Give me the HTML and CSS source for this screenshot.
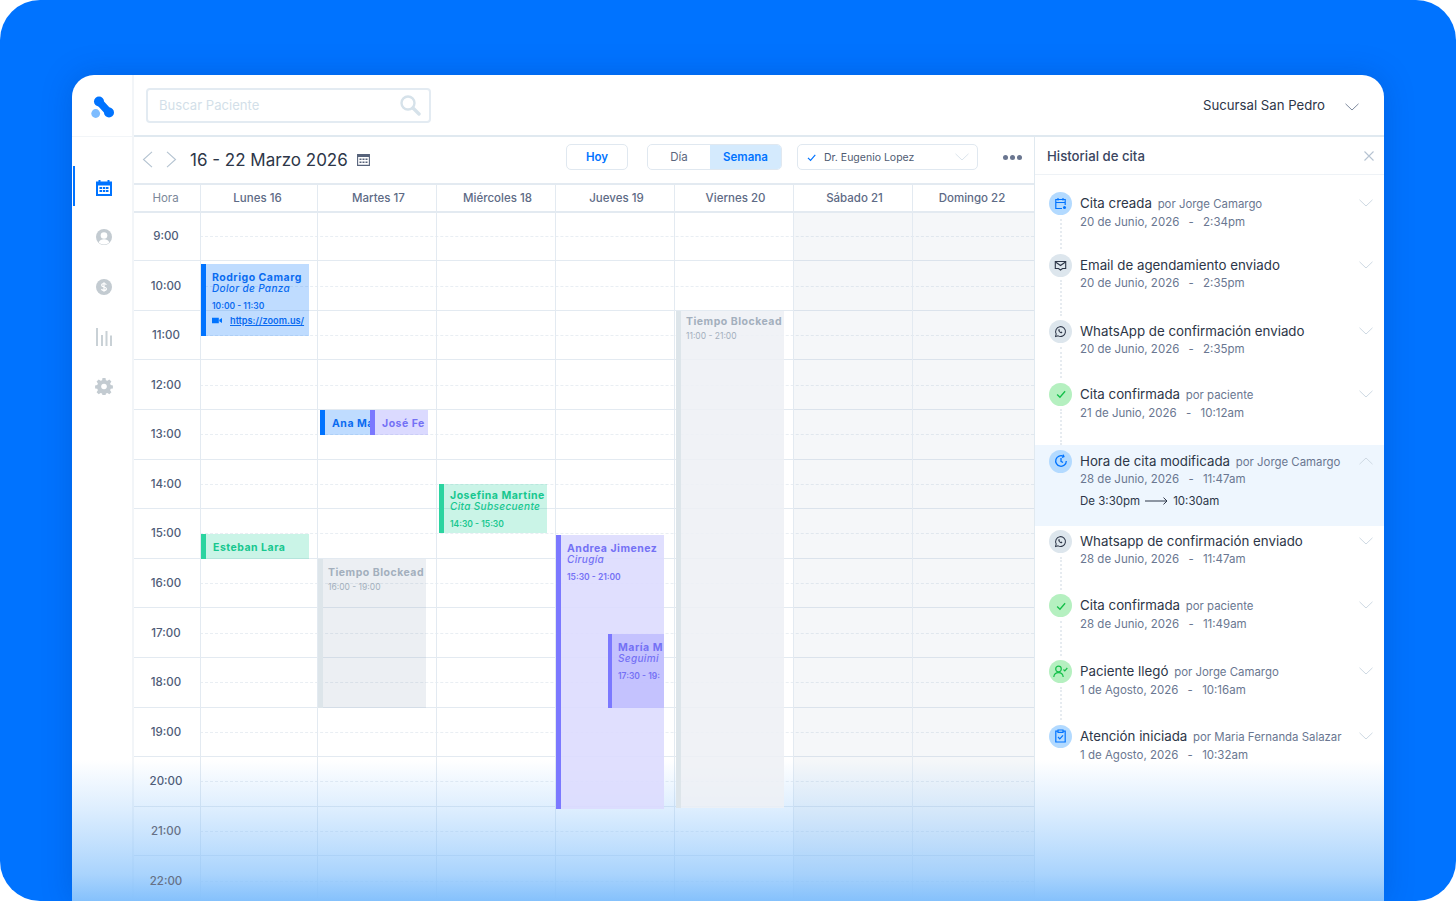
FILE: index.html
```html
<!DOCTYPE html>
<html lang="es">
<head>
  <meta charset="UTF-8" />
  <meta name="viewport" content="width=device-width, initial-scale=1.0" />
  <title>Historial de cita</title>
  <link rel="stylesheet" href="styles.css">
</head>
<body>
  <svg class="sprites" width="0" height="0">
    <symbol id="chev" viewBox="0 0 14 8"><path d="M.5.8 7 7l6.500-6.200" fill="none" stroke="currentColor" stroke-width="1"/></symbol>
    <symbol id="ok" viewBox="0 0 14 14"><path d="M2.500 7.500 5.800 10.800 11.800 3.800" fill="none" stroke="currentColor" stroke-width="1.500"/></symbol>
    <symbol id="wa" viewBox="0 0 14 14"><path d="M1.600 12.500l.8-2.900A5.300 5.300 0 1 1 4.500 11.700z" fill="none" stroke="currentColor" stroke-width="1.100" stroke-linejoin="round"/><path d="M5 4.600c-.7.600-.4 1.800.6 2.900s2.300 1.700 3 1.100l.5-.8-1.300-.8-.6.500c-.6-.2-1.100-.8-1.300-1.300l.5-.6-.7-1.300z" fill="currentColor"/></symbol>
  </svg>

  <div class="stage">
    <div class="app">
      <aside class="sidebar">
        <div class="logo">
          <svg width="26" height="26" viewBox="0 0 26 26">
            <path d="M10 8.500 20 19.500" stroke="#0073ff" stroke-width="7.500" stroke-linecap="round"/>
            <circle cx="10" cy="8.500" r="5" fill="#0073ff"/>
            <circle cx="20" cy="19.500" r="5" fill="#0073ff"/>
            <circle cx="6.700" cy="20.500" r="4.400" fill="#7dbcff"/>
          </svg>
        </div>
        <nav class="side-nav">
          <a class="side-link active">
            <svg width="18" height="18" viewBox="0 0 18 18"><path d="M1 2.500h2.500V1h2v1.500h7V1h2v1.500H17V17H1z" fill="#0073ff"/><path d="M3 6.500h12V15H3z" fill="#fff"/><path d="M4.500 8h2.500v2H4.500zM7.800 8h2.500v2H7.800zM11 8h2.500v2H11zM4.500 11h2.500v2H4.500zM7.800 11h2.500v2H7.800zM11 11h2.500v2H11z" fill="#0073ff"/></svg>
          </a>
          <a class="side-link">
            <svg width="18" height="18" viewBox="0 0 18 18"><circle cx="9" cy="9" r="8" fill="#c3cbd1"/><circle cx="9" cy="7.500" r="3.300" fill="#fff"/><path d="M3.600 14.500c1-2.600 3-3.300 5.400-3.300s4.400.7 5.400 3.300A8 8 0 0 1 9 16.500a8 8 0 0 1-5.400-2z" fill="#fff"/></svg>
          </a>
          <a class="side-link">
            <svg width="18" height="18" viewBox="0 0 18 18"><circle cx="9" cy="9" r="8" fill="#c3cbd1"/><path d="M11.300 6.800C11 5.900 10 5.500 9 5.500c-1.200 0-2.300.6-2.300 1.700 0 2.400 4.700 1.200 4.700 3.600 0 1.100-1.100 1.700-2.400 1.700-1.200 0-2.200-.5-2.500-1.500M9 4.200v9.600" fill="none" stroke="#fff" stroke-width="1.200"/></svg>
          </a>
          <a class="side-link">
            <svg width="18" height="20" viewBox="0 0 18 20"><path d="M1 2h2v18H1zM6 9h2v11H6zM10.500 5h2v15h-2zM15 9.500h2V20h-2z" fill="#c9d1d6"/></svg>
          </a>
          <a class="side-link">
            <svg width="18" height="18" viewBox="0 0 18 18"><path d="M7.500 1h3l.4 2.200 1.500.6 1.900-1.300 2.100 2.100-1.300 1.900.6 1.500 2.200.4v3l-2.200.4-.6 1.500 1.300 1.900-2.100 2.100-1.900-1.300-1.500.6-.4 2.200h-3l-.4-2.200-1.500-.6-1.900 1.300-2.100-2.100 1.300-1.900-.6-1.500-2.200-.4v-3l2.200-.4.6-1.500-1.300-1.900 2.100-2.100 1.900 1.300 1.500-.6z" fill="#c3cbd1"/><circle cx="9" cy="9.500" r="2.800" fill="#fff"/></svg>
          </a>
        </nav>
      </aside>

      <div class="content">
        <header class="topbar">
          <div class="search">
            <span>Buscar Paciente</span>
            <svg width="22" height="22" viewBox="0 0 22 22"><circle cx="9" cy="9" r="6.500" fill="none" stroke="#d6e2ea" stroke-width="2.400"/><path d="M14 14l6 6" stroke="#d6e2ea" stroke-width="3.400" stroke-linecap="round"/></svg>
          </div>
          <div class="branch">
            <span>Sucursal San Pedro</span>
            <svg class="branch-chev" width="14" height="8"><use href="#chev"/></svg>
          </div>
        </header>

        <div class="main">
          <section class="calendar">
            <div class="toolbar">
              <div class="toolbar-left">
                <svg class="arrow" width="11" height="17" viewBox="0 0 11 17"><path d="M10 .8 1.500 8.500 10 16.200" fill="none" stroke="#b4c3d1" stroke-width="1.100"/></svg>
                <svg class="arrow arrow-next" width="11" height="17" viewBox="0 0 11 17"><path d="M1 .8 9.500 8.500 1 16.200" fill="none" stroke="#b4c3d1" stroke-width="1.100"/></svg>
                <h1 class="range">16 - 22 Marzo 2026</h1>
                <svg class="range-icon" width="13" height="13" viewBox="0 0 13 13"><path d="M.6 1.600h11.800v10.800H.6z" fill="none" stroke="#56627a" stroke-width="1.100"/><path d="M.6 1.600h11.800V4H.6z" fill="#56627a"/><path d="M2.500 5.500h2v1.500h-2zM5.500 5.500h2v1.500h-2zM8.500 5.500h2v1.500h-2zM2.500 8.500h2v1.500h-2zM5.500 8.500h2v1.500h-2zM8.500 8.500h2v1.500h-2z" fill="#56627a"/></svg>
              </div>
              <button class="btn-today">Hoy</button>
              <div class="segmented">
                <span class="seg">Día</span>
                <span class="seg seg-on">Semana</span>
              </div>
              <div class="doctor">
                <svg class="doctor-check" width="11" height="11"><use href="#ok"/></svg>
                <span>Dr. Eugenio Lopez</span>
                <svg class="doctor-chev" width="14" height="8"><use href="#chev"/></svg>
              </div>
              <div class="dots"><i></i><i></i><i></i></div>
            </div>

            <div class="week-head">
              <div class="head-cell head-hour">Hora</div>
              <div class="head-cell head-first">Lunes 16</div>
              <div class="head-cell">Martes 17</div>
              <div class="head-cell">Miércoles 18</div>
              <div class="head-cell">Jueves 19</div>
              <div class="head-cell">Viernes 20</div>
              <div class="head-cell">Sábado 21</div>
              <div class="head-cell head-last">Domingo 22</div>
            </div>

            <div class="week-body">
              <div class="hours">
                <div class="hour"><span>9:00</span></div>
                <div class="hour"><span>10:00</span></div>
                <div class="hour"><span>11:00</span></div>
                <div class="hour"><span>12:00</span></div>
                <div class="hour"><span>13:00</span></div>
                <div class="hour"><span>14:00</span></div>
                <div class="hour"><span>15:00</span></div>
                <div class="hour"><span>16:00</span></div>
                <div class="hour"><span>17:00</span></div>
                <div class="hour"><span>18:00</span></div>
                <div class="hour"><span>19:00</span></div>
                <div class="hour"><span>20:00</span></div>
                <div class="hour hour-late"><span>21:00</span></div>
                <div class="hour hour-late"><span>22:00</span></div>
              </div>

              <div class="day day-1">
                <div class="event blue ev-rodrigo">
                  <b>Rodrigo Camarg</b>
                  <em>Dolor de Panza</em>
                  <small>10:00 - 11:30</small>
                  <div class="zoom">
                    <svg width="10" height="7" viewBox="0 0 10 7"><path d="M0 .8h6.800v5.400H0zM7.300 2.800 10 1v5L7.300 4.200z" fill="#0073ff"/></svg>
                    <u>https://zoom.us/</u>
                  </div>
                </div>
                <div class="event green ev-esteban"><b>Esteban Lara</b></div>
              </div>

              <div class="day day-2">
                <div class="event blue ev-ana"><b>Ana Ma</b></div>
                <div class="event purple ev-jose"><b>José Fe</b></div>
                <div class="event gray ev-block-mar"><b>Tiempo Blockead</b><small>16:00 - 19:00</small></div>
              </div>

              <div class="day day-3">
                <div class="event green ev-josefina">
                  <b>Josefina Martíne</b>
                  <em>Cita Subsecuente</em>
                  <small>14:30 - 15:30</small>
                </div>
              </div>

              <div class="day day-4">
                <div class="event purple ev-andrea">
                  <b>Andrea Jimenez</b>
                  <em>Cirugía</em>
                  <small>15:30 - 21:00</small>
                </div>
                <div class="event purple ev-maria">
                  <b>María M</b>
                  <em>Seguimi</em>
                  <small>17:30 - 19:</small>
                </div>
              </div>

              <div class="day day-5">
                <div class="event gray ev-block-vie"><b>Tiempo Blockead</b><small>11:00 - 21:00</small></div>
              </div>

              <div class="day day-6 weekend"></div>
              <div class="day day-7 weekend"></div>
            </div>
          </section>

          <aside class="history">
            <div class="history-head">
              <h2>Historial de cita</h2>
              <svg width="10" height="10" viewBox="0 0 10 10"><path d="M.5.500l9 9M9.500.500l-9 9" stroke="#b6c3d2" stroke-width="1.100"/></svg>
            </div>
            <ul class="log">
              <li class="log-item">
                <span class="dot dot-blue">
                  <svg width="13" height="13" viewBox="0 0 13 13" fill="none" stroke="currentColor" stroke-width="1.200"><path d="M8 11.500H1.800V2.500h9.400v5.500M1.800 5.500h9.400M4 1v2.500M9 1v2.500"/><circle cx="10.500" cy="10.500" r="1.500" fill="currentColor" stroke="none"/></svg>
                </span>
                <div class="log-text">
                  <p class="log-title">Cita creada <span>por Jorge Camargo</span></p>
                  <p class="log-date">20 de Junio, 2026 <i>-</i> 2:34pm</p>
                </div>
                <svg class="log-chev" width="14" height="8"><use href="#chev"/></svg>
              </li>
              <li class="log-item">
                <span class="dot dot-gray">
                  <svg width="13" height="13" viewBox="0 0 13 13" fill="none" stroke="currentColor" stroke-width="1.100"><path d="M1.300 2.500h10.400v7H8.500l-2 1.500-2-1.500H1.300z"/><path d="M1.500 3 6.500 6.500 11.500 3"/></svg>
                </span>
                <div class="log-text">
                  <p class="log-title">Email de agendamiento enviado</p>
                  <p class="log-date">20 de Junio, 2026 <i>-</i> 2:35pm</p>
                </div>
                <svg class="log-chev" width="14" height="8"><use href="#chev"/></svg>
              </li>
              <li class="log-item">
                <span class="dot dot-gray"><svg width="13" height="13"><use href="#wa"/></svg></span>
                <div class="log-text">
                  <p class="log-title">WhatsApp de confirmación enviado</p>
                  <p class="log-date">20 de Junio, 2026 <i>-</i> 2:35pm</p>
                </div>
                <svg class="log-chev" width="14" height="8"><use href="#chev"/></svg>
              </li>
              <li class="log-item">
                <span class="dot dot-green"><svg width="12" height="12"><use href="#ok"/></svg></span>
                <div class="log-text">
                  <p class="log-title">Cita confirmada <span>por paciente</span></p>
                  <p class="log-date">21 de Junio, 2026 <i>-</i> 10:12am</p>
                </div>
                <svg class="log-chev" width="14" height="8"><use href="#chev"/></svg>
              </li>
              <li class="log-item open">
                <span class="dot dot-blue">
                  <svg width="14" height="14" viewBox="0 0 14 14" fill="none" stroke="currentColor" stroke-width="1.300"><path d="M12.300 7A5.300 5.300 0 1 1 9.500 2.300"/><path d="M7 4v3.300l2 1.200M9.200 .6l.7 2-2 .7"/></svg>
                </span>
                <div class="log-text">
                  <p class="log-title">Hora de cita modificada <span>por Jorge Camargo</span></p>
                  <p class="log-date">28 de Junio, 2026 <i>-</i> 11:47am</p>
                  <p class="log-change">De 3:30pm
                    <svg width="23" height="8" viewBox="0 0 23 8"><path d="M0 4h22M18.500.6 22 4l-3.500 3.400" fill="none" stroke="#2d3648" stroke-width="1"/></svg>
                    10:30am</p>
                </div>
                <svg class="log-chev flip" width="14" height="8"><use href="#chev"/></svg>
              </li>
              <li class="log-item">
                <span class="dot dot-gray"><svg width="13" height="13"><use href="#wa"/></svg></span>
                <div class="log-text">
                  <p class="log-title">Whatsapp de confirmación enviado</p>
                  <p class="log-date">28 de Junio, 2026 <i>-</i> 11:47am</p>
                </div>
                <svg class="log-chev" width="14" height="8"><use href="#chev"/></svg>
              </li>
              <li class="log-item">
                <span class="dot dot-green"><svg width="12" height="12"><use href="#ok"/></svg></span>
                <div class="log-text">
                  <p class="log-title">Cita confirmada <span>por paciente</span></p>
                  <p class="log-date">28 de Junio, 2026 <i>-</i> 11:49am</p>
                </div>
                <svg class="log-chev" width="14" height="8"><use href="#chev"/></svg>
              </li>
              <li class="log-item">
                <span class="dot dot-green">
                  <svg width="15" height="13" viewBox="0 0 15 13" fill="none" stroke="currentColor" stroke-width="1.200"><circle cx="5.500" cy="4" r="2.800"/><path d="M.8 12c.3-3 2.200-4.300 4.700-4.300S9.900 9 10.200 12M10.500 4.500l1.300 1.300L14.300 3"/></svg>
                </span>
                <div class="log-text">
                  <p class="log-title">Paciente llegó <span>por Jorge Camargo</span></p>
                  <p class="log-date">1 de Agosto, 2026 <i>-</i> 10:16am</p>
                </div>
                <svg class="log-chev" width="14" height="8"><use href="#chev"/></svg>
              </li>
              <li class="log-item last">
                <span class="dot dot-blue">
                  <svg width="13" height="14" viewBox="0 0 13 14" fill="none" stroke="currentColor" stroke-width="1.200"><path d="M4 2.200H1.800v10.800h9.400V2.200H9M4 1h5v2.300H4z"/><path d="M4 8l1.800 1.800L9 6.300"/></svg>
                </span>
                <div class="log-text">
                  <p class="log-title">Atención iniciada <span>por Maria Fernanda Salazar</span></p>
                  <p class="log-date">1 de Agosto, 2026 <i>-</i> 10:32am</p>
                </div>
                <svg class="log-chev" width="14" height="8"><use href="#chev"/></svg>
              </li>
            </ul>
          </aside>
        </div>
      </div>

      <div class="fade"></div>
    </div>
  </div>
</body>
</html>
```

FILE: styles.css
```css
:root {
  --blue: #0073ff;
  --line: #e3eaf1;
  --text: #2d3648;
  --muted: #6a7791;
}
* { box-sizing: border-box; }
html, body {
  margin: 0;
  padding: 0;
  height: 100%;
  overflow: hidden;
  background: #fff;
  color: var(--text);
  font-family: Inter, "Noto Sans", sans-serif;
}
p, h1, h2, ul { margin: 0; padding: 0; }
ul { list-style: none; }
svg { display: block; flex: none; }
.sprites { position: absolute; }

.stage {
  height: 100vh;
  padding: 75px 72px 0;
  background: var(--blue);
  border-radius: 40px;
  overflow: hidden;
}
.app {
  position: relative;
  display: flex;
  height: 100%;
  background: #fff;
  border-radius: 22px 22px 0 0;
  overflow: hidden;
  box-shadow: 0 0 30px rgba(0, 50, 140, .25);
}
.fade {
  position: absolute;
  left: 0;
  right: 0;
  bottom: 0;
  height: 141px;
  z-index: 2;
  pointer-events: none;
  background: linear-gradient(rgba(133, 193, 252, 0), rgba(133, 193, 252, .28) 35%, rgba(133, 193, 252, .5) 60%, rgba(133, 193, 252, .7) 81%, #85c1fc);
}

/* sidebar */
.sidebar {
  width: 62px;
  flex: none;
  border-right: 2px solid #f2f5f8;
}
.logo {
  height: 62px;
  display: flex;
  align-items: center;
  justify-content: center;
  border-bottom: 1px solid #f2f5f8;
}
.side-nav {
  display: flex;
  flex-direction: column;
  padding-top: 26px;
}
.side-link {
  height: 49.500px;
  display: flex;
  align-items: center;
  justify-content: center;
  padding-left: 3px;
  position: relative;
}
.side-link.active::before {
  content: "";
  position: absolute;
  left: 1px;
  top: 3px;
  height: 40px;
  width: 2px;
  background: var(--blue);
}

/* top bar */
.content {
  flex: 1;
  min-width: 0;
  display: flex;
  flex-direction: column;
}
.topbar {
  height: 62px;
  flex: none;
  display: flex;
  align-items: center;
  justify-content: space-between;
  padding: 0 25px 0 12px;
  border-bottom: 2px solid #e0e9f0;
}
.search {
  width: 285px;
  height: 35px;
  display: flex;
  align-items: center;
  justify-content: space-between;
  padding: 0 8px 0 11px;
  border: 2px solid #e3ebf2;
  border-radius: 4px;
  font-size: 13.100px;
  color: #d3dfe9;
}
.branch {
  display: flex;
  align-items: center;
  gap: 20px;
  font-size: 13.200px;
}
.branch-chev { color: #7e8a9e; margin-top: 3px; }

.main {
  flex: 1;
  min-height: 0;
  display: flex;
}

/* calendar */
.calendar {
  flex: 1;
  min-width: 0;
}
.toolbar {
  height: 46px;
  display: flex;
  align-items: center;
  padding-bottom: 6px;
}
.toolbar-left {
  width: 432px;
  display: flex;
  align-items: center;
  padding: 5px 0 0 8px;
}
.arrow-next { margin-left: 13px; }
.range {
  margin-left: 13px;
  font-size: 17px;
  font-weight: 400;
  white-space: nowrap;
}
.range-icon { margin-left: 9px; }
.btn-today {
  width: 62px;
  height: 26px;
  padding: 0;
  background: #fff;
  border: 1.500px solid #e0e8f0;
  border-radius: 5px;
  color: var(--blue);
  font: 600 11.500px Inter, sans-serif;
}
.segmented {
  margin-left: 19px;
  width: 135px;
  height: 26px;
  display: flex;
  border: 1.500px solid #e0e8f0;
  border-radius: 5px;
  overflow: hidden;
  font-size: 11.500px;
}
.seg {
  width: 62px;
  display: flex;
  align-items: center;
  justify-content: center;
  color: #5b677e;
}
.seg-on {
  flex: 1;
  background: #d4eafd;
  color: var(--blue);
  font-weight: 600;
}
.doctor {
  margin-left: 15px;
  width: 181px;
  height: 26px;
  display: flex;
  align-items: center;
  padding: 0 8px;
  border: 1.500px solid #e0e8f0;
  border-radius: 5px;
  font-size: 10.500px;
  color: #4f5b72;
}
.doctor-check { color: var(--blue); margin-right: 7px; }
.doctor-chev { margin-left: auto; color: #dbe4ec; }
.dots {
  margin-left: 25px;
  display: flex;
  gap: 2px;
}
.dots i {
  width: 5px;
  height: 5px;
  border-radius: 50%;
  background: #6a7690;
}

.week-head, .week-body {
  display: grid;
  grid-template-columns: 66px 117px repeat(5, 119px) 1fr;
}
.week-head {
  height: 30px;
  border-top: 2px solid var(--line);
  border-bottom: 2px solid var(--line);
}
.head-cell {
  display: flex;
  align-items: center;
  justify-content: center;
  padding-left: 3px;
  border-left: 1.500px solid var(--line);
  font-size: 11.500px;
  font-weight: 500;
  color: #5d6a85;
}
.head-hour {
  border-left: 0;
  padding: 0 3px 0 0;
  font-weight: 400;
  color: #7b8799;
}
.head-first { padding: 0 3px 0 0; }
.head-last { padding: 0 3px 0 0; }
.week-body {
  position: relative;
  height: 720px;
}
.hours {
  grid-column: 1 / -1;
  grid-row: 1;
  margin-top: -1.400px;
}
.hour {
  position: relative;
  height: 49.600px;
  display: flex;
  align-items: center;
  justify-content: center;
  padding-right: 836px;
  border-bottom: 1.500px solid var(--line);
  font-size: 11.500px;
  font-weight: 500;
  color: #4e5c78;
}
.hour-late { color: #667186; }
.hour span {
  position: relative;
  z-index: 3;
}
.hour::after {
  content: "";
  position: absolute;
  left: 66px;
  right: 0;
  top: 50%;
  border-top: 1px dashed #e9eef3;
}
.day {
  grid-row: 1;
  position: relative;
  border-left: 1.500px solid var(--line);
}
.day-1 { grid-column: 2; }
.day-2 { grid-column: 3; }
.day-3 { grid-column: 4; }
.day-4 { grid-column: 5; }
.day-5 { grid-column: 6; }
.day-6 { grid-column: 7; }
.day-7 { grid-column: 8; }
.weekend { background: rgba(130, 150, 175, .08); }

/* events */
.event {
  position: absolute;
  overflow: hidden;
  white-space: nowrap;
  padding: 8px 0 0 6px;
  border-left: 5px solid;
}
.event b, .event em, .event small { display: block; }
.event b {
  font-size: 10.500px;
  line-height: 11px;
  font-weight: 700;
  letter-spacing: .5px;
}
.event em {
  font-size: 10px;
  line-height: 11px;
  font-weight: 500;
  letter-spacing: .35px;
}
.event small {
  margin-top: 7px;
  font-size: 8.500px;
  line-height: 11px;
  font-weight: 600;
}
.blue { background: rgba(0, 115, 255, .25); border-color: var(--blue); color: #0a6bf0; }
.green { background: rgba(43, 212, 160, .25); border-color: #2bd4a0; color: #17c78f; }
.purple { background: rgba(123, 120, 255, .27); border-color: #7b78ff; color: #7471f5; }
.gray { background: rgba(130, 150, 175, .15); border-color: #dde5ea; color: #a3afbd; }

.ev-rodrigo { left: 0; top: 51px; width: 108px; height: 72px; }
.zoom {
  display: flex;
  align-items: center;
  gap: 8px;
  margin-top: 3px;
  font-size: 9.200px;
  font-weight: 600;
}
.ev-esteban, .ev-ana, .ev-jose {
  height: 25px;
  display: flex;
  align-items: center;
  padding: 1px 0 0 7px;
}
.ev-esteban { left: 0; top: 321px; width: 108px; }
.ev-ana { left: 2px; top: 197px; width: 55px; }
.ev-jose { left: 52px; top: 197px; width: 58px; }
.ev-block-mar { left: 0; top: 346px; width: 108px; height: 149px; padding-left: 5px; }
.ev-block-mar small, .ev-block-vie small { font-weight: 400; margin-top: 4px; }
.ev-josefina { left: 2px; top: 271px; width: 108px; height: 49px; padding-top: 6px; }
.ev-andrea { left: 0; top: 322px; width: 108px; height: 274px; z-index: 3; background: rgba(220, 219, 254, .88); }
.ev-maria { left: 52px; top: 421px; width: 56px; height: 74px; border-left-width: 4px; z-index: 3; }
.ev-block-vie { left: 1px; top: 98px; width: 108px; height: 497px; padding: 5px 0 0 5px; z-index: 3; background: rgba(237, 240, 244, .85); }

/* history panel */
.history {
  width: 350px;
  flex: none;
  border-left: 1.500px solid #e0e9f0;
}
.history-head {
  height: 38px;
  display: flex;
  align-items: center;
  justify-content: space-between;
  padding: 0 10px 0 12px;
  border-bottom: 1px solid #eef2f6;
}
.history-head h2 {
  font-size: 13.200px;
  font-weight: 500;
  color: #3a4560;
}
.log {
  padding-top: 12.500px;
  display: grid;
  grid-template-rows: 61.500px 66.500px 62.500px 67px 80.500px 64px 66px 64.500px 60px;
}
.log-item {
  position: relative;
  display: flex;
  padding: 4.500px 11px 0 14px;
}
.log-item.open { background: #eef6fe; }
.log-item::after {
  content: "";
  position: absolute;
  left: 25px;
  top: 31px;
  bottom: 0;
  border-left: 2px dotted #e6ebf0;
}
.log-item.open::after { display: none; }
.log-item.last::after { display: none; }
.dot {
  width: 23px;
  height: 23px;
  flex: none;
  border-radius: 50%;
  display: flex;
  align-items: center;
  justify-content: center;
}
.dot-blue { background: #b3daff; color: var(--blue); }
.dot-gray { background: #dde6ed; color: #2d3648; }
.dot-green { background: #b5f0c0; color: #12bf48; }
.log-text {
  margin-left: 8px;
  margin-top: 2px;
  flex: 1;
  min-width: 0;
}
.log-title {
  font-size: 13.300px;
  line-height: 18px;
  white-space: nowrap;
}
.log-title span {
  margin-left: 2px;
  font-size: 11.400px;
  color: var(--muted);
}
.log-date {
  font-size: 11.500px;
  line-height: 18px;
  color: var(--muted);
}
.open .log-date { margin-top: -1px; }
.log-date i {
  font-style: normal;
  margin: 0 6px;
}
.log-change {
  margin-top: 4px;
  display: flex;
  align-items: center;
  gap: 5px;
  font-size: 11.500px;
  line-height: 18px;
}
.log-chev {
  margin-top: 7px;
  margin-left: 4px;
  color: #ced9e3;
}
.log-chev.flip { transform: scaleY(-1); }
```
